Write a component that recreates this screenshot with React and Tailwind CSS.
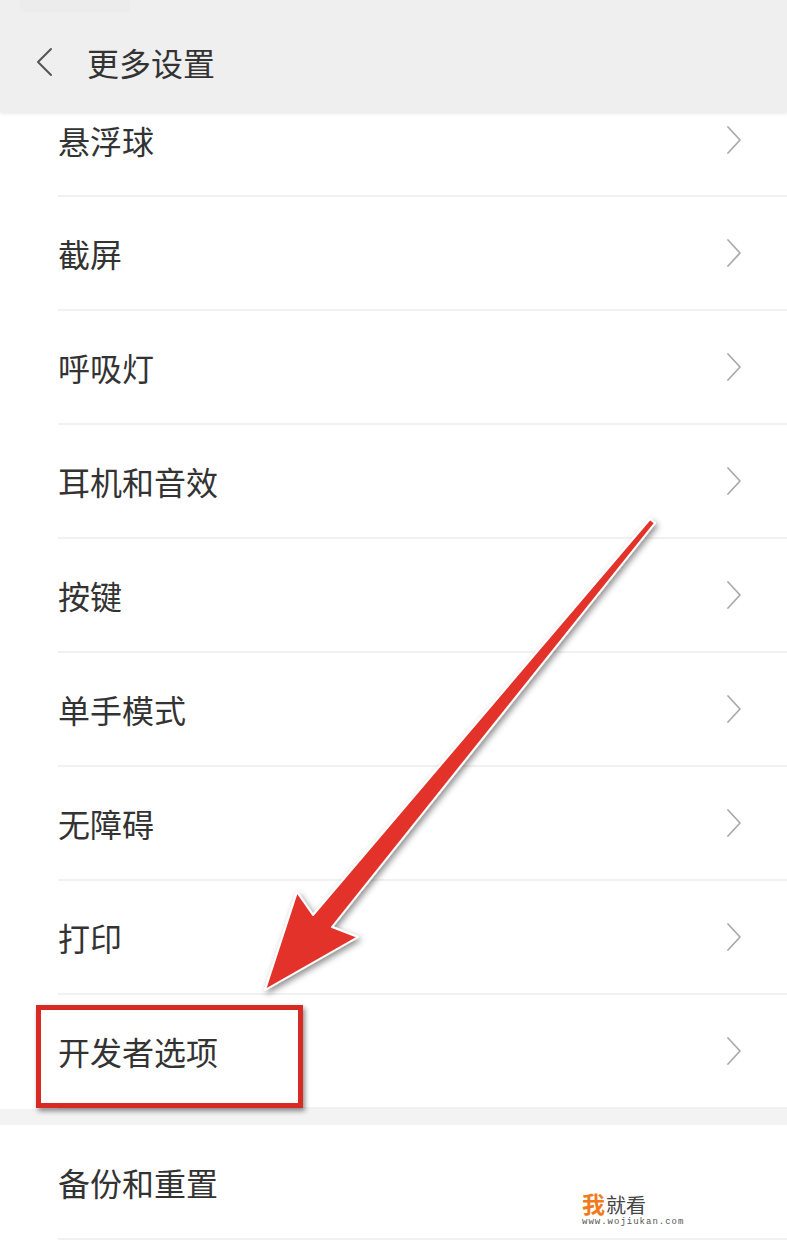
import React from "react";

const items = ["截屏", "呼吸灯", "耳机和音效", "按键", "单手模式", "无障碍", "打印", "开发者选项"];

const Chevron = () => (
    <svg width="16" height="30" viewBox="0 0 16 30" fill="none" className="shrink-0">
        <path d="M2 2 L14 15 L2 28" stroke="#ababab" strokeWidth="1.8" strokeLinecap="round" strokeLinejoin="round" />
    </svg>
);

const Row = ({ label }) => (
    <div className="flex pl-[58px] h-[114px]">
        <div className="flex flex-1 h-full items-center justify-between pr-[45px] border-b-2 border-[#f1f1f1]">
            <span className="text-[32px] text-[#333]">{label}</span>
            <Chevron />
        </div>
    </div>
);

export default function App() {
    return (
        <div
            className="relative w-[787px] h-[1242px] overflow-hidden bg-white"
            style={{ fontFamily: '"Noto Sans CJK SC", "Noto Sans", sans-serif' }}
        >
            {/* header */}
            <div className="h-[112px] bg-[#efefef] shadow-[0_2px_3px_rgba(0,0,0,0.08)] relative z-10">
                <div className="h-[12px] ml-[20px] w-[110px] bg-[#ececec] rounded-b" />
                <div className="flex items-center pl-[35px] pt-[34px] gap-[34px]">
                    <svg width="18" height="30" viewBox="0 0 18 30" fill="none">
                        <path d="M16 2 L3 15 L16 28" stroke="#555" strokeWidth="2" strokeLinecap="round" strokeLinejoin="round" />
                    </svg>
                    <span className="text-[32px] text-[#333] leading-none">更多设置</span>
                </div>
            </div>

            {/* first row, partly under the header */}
            <div className="flex pl-[58px] h-[85px]">
                <div className="flex flex-1 h-full items-start justify-between pr-[45px] pt-[7px] border-b-2 border-[#f1f1f1]">
                    <span className="text-[32px] text-[#333] leading-[42px]">悬浮球</span>
                    <div className="pt-[6px]">
                        <Chevron />
                    </div>
                </div>
            </div>

            {items.map((label) => (
                <Row key={label} label={label} />
            ))}

            <div className="h-[16px] bg-[#f3f3f3]" />

            <div className="flex pl-[58px] h-[115px]">
                <div className="flex flex-1 h-full items-center justify-between pr-[45px] border-b-2 border-[#f1f1f1]">
                    <span className="text-[32px] text-[#333]">备份和重置</span>
                </div>
            </div>

            {/* watermark */}
            <div className="absolute left-[582px] top-[1192px] flex flex-col gap-[3px]">
                <div className="flex items-end gap-[1px] leading-none">
                    <span className="text-[23px] font-bold text-[#f07a1c] leading-none">我</span>
                    <span className="text-[20px] text-[#444] leading-none">就看</span>
                </div>
                <span
                    className="text-[9px] text-[#555] tracking-[1px] leading-none"
                    style={{ fontFamily: '"Liberation Mono", monospace' }}
                >
                    www.wojiukan.com
                </span>
            </div>

            {/* red highlight box */}
            <div className="absolute left-[36px] top-[1005px] w-[267px] h-[103px] border-[5px] border-[#d62a22] shadow-[2px_3px_5px_rgba(0,0,0,0.45)]" />

            {/* arrow */}
            <svg className="absolute left-0 top-0 pointer-events-none" width="787" height="1242" viewBox="0 0 787 1242">
                <defs>
                    <filter id="sh" x="-20%" y="-20%" width="140%" height="140%">
                        <feDropShadow dx="2" dy="3" stdDeviation="3" floodColor="#000" floodOpacity="0.45" />
                    </filter>
                </defs>
                <polygon
                    points="650,519 655,523 332,927 358,937 265,990 297,892 313,915"
                    fill="#e3302a"
                    stroke="#fff"
                    strokeWidth="2"
                    strokeLinejoin="round"
                    filter="url(#sh)"
                />
            </svg>
        </div>
    );
}
